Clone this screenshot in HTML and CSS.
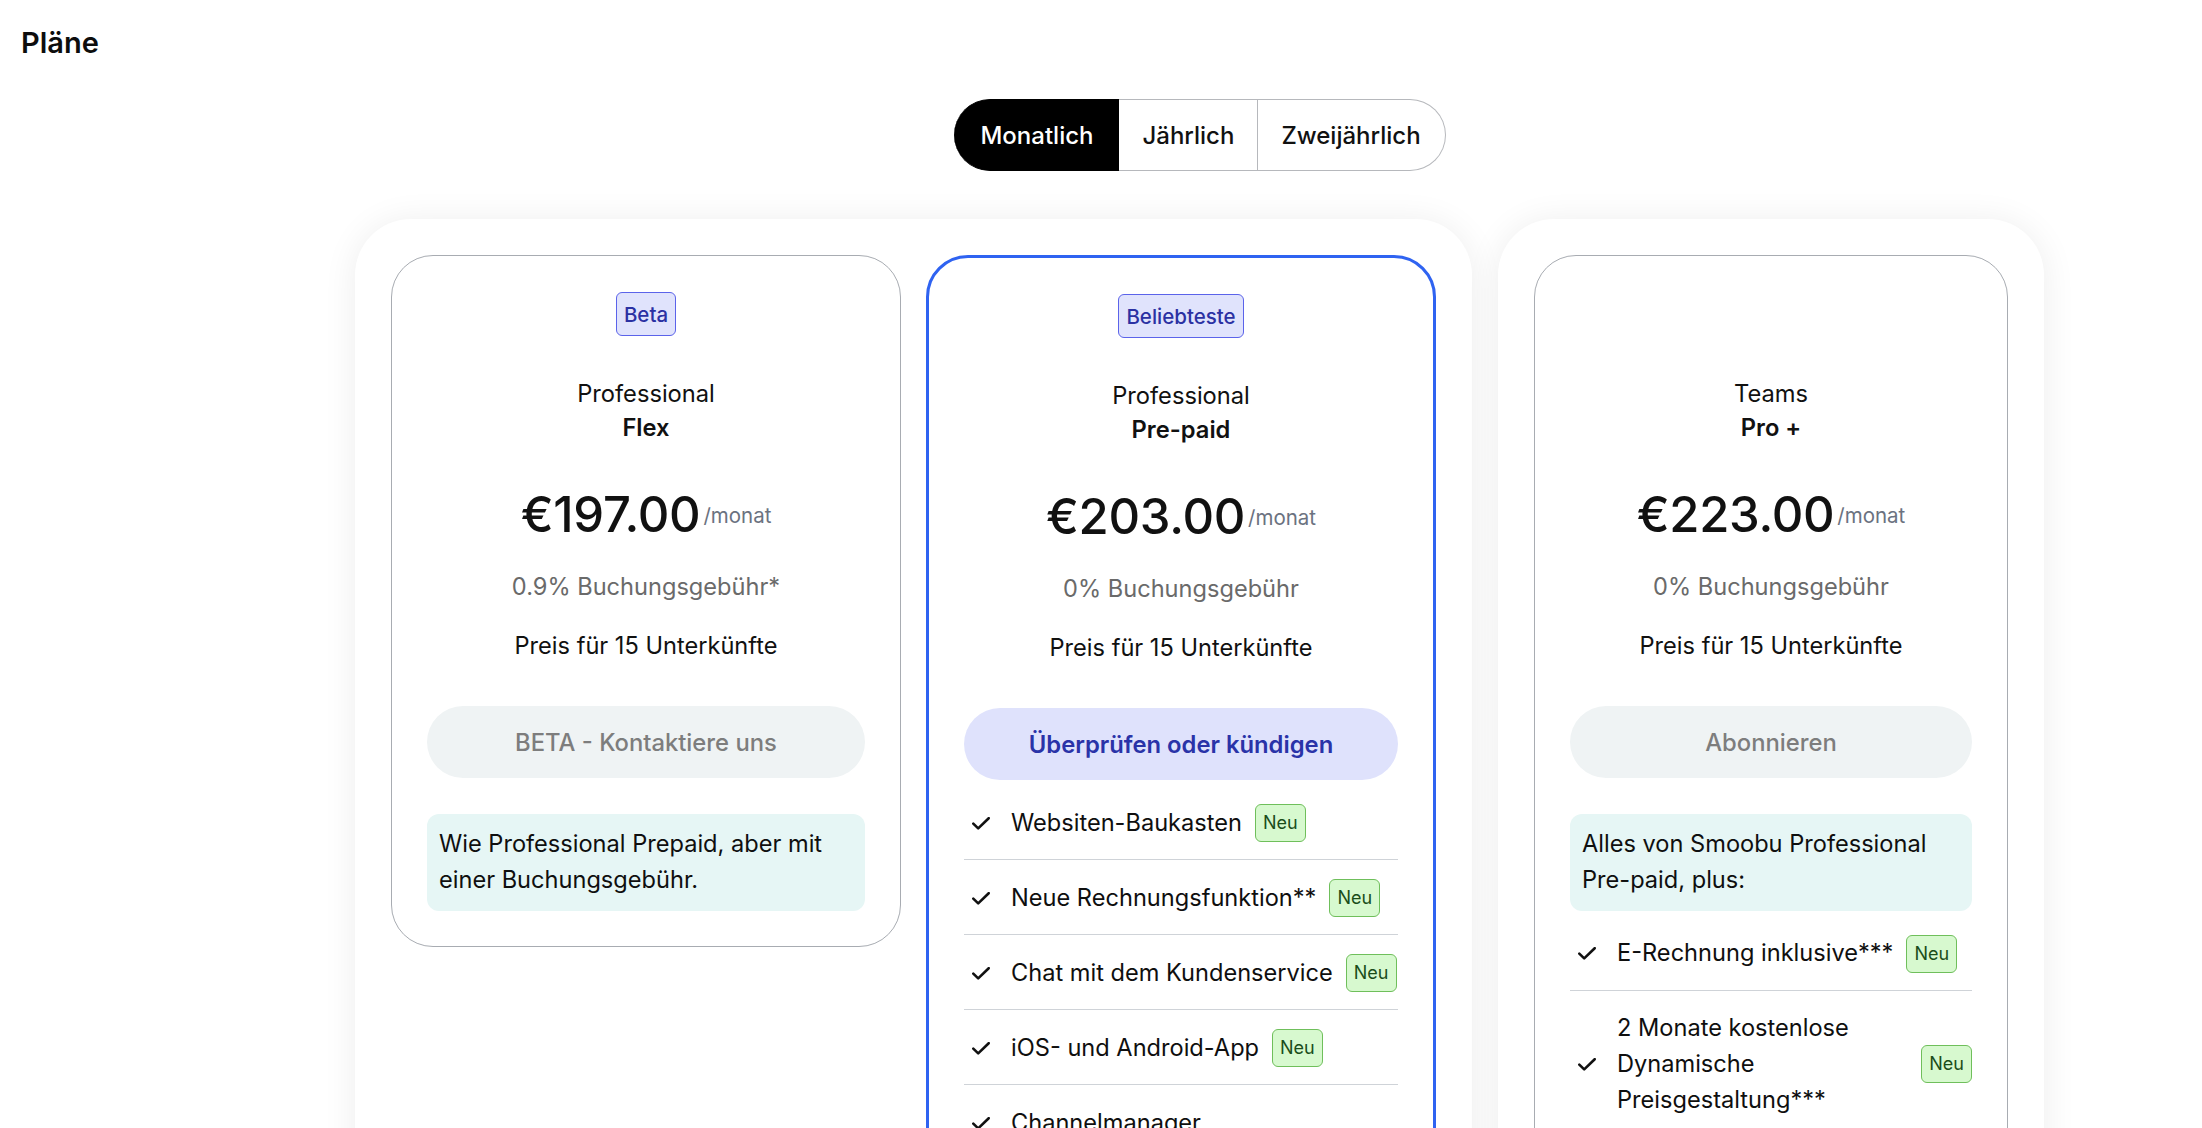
FILE: index.html
```html
<!DOCTYPE html>
<html lang="de">
<head>
<meta charset="utf-8">
<title>Pläne</title>
<link rel="stylesheet" href="styles.css">
</head>
<body>
<h1 class="page-title">Pläne</h1>
<main class="plans">
  <div class="period-toggle">
    <button class="seg seg-active">Monatlich</button>
    <button class="seg">Jährlich</button>
    <button class="seg">Zweijährlich</button>
  </div>

  <div class="panels">
    <section class="panel">
      <article class="card">
        <div class="badge-slot"><span class="tag">Beta</span></div>
        <h2 class="plan-name">Professional<strong>Flex</strong></h2>
        <div class="price"><span class="amount">€197.00</span><span class="per">/monat</span></div>
        <p class="fee">0.9% Buchungsgebühr*</p>
        <p class="units">Preis für 15 Unterkünfte</p>
        <button class="cta">BETA - Kontaktiere uns</button>
        <div class="note">Wie Professional Prepaid, aber mit einer Buchungsgebühr.</div>
      </article>

      <article class="card card-featured">
        <div class="badge-slot"><span class="tag">Beliebteste</span></div>
        <h2 class="plan-name">Professional<strong>Pre-paid</strong></h2>
        <div class="price"><span class="amount">€203.00</span><span class="per">/monat</span></div>
        <p class="fee">0% Buchungsgebühr</p>
        <p class="units">Preis für 15 Unterkünfte</p>
        <button class="cta cta-primary">Überprüfen oder kündigen</button>
        <ul class="features">
          <li class="feature">
            <svg class="check" viewBox="0 0 18 13"><path d="M1.3 6.6 L6.2 11.4 L16.7 1.2"/></svg>
            <span class="feature-text">Websiten-Baukasten</span><span class="new">Neu</span>
          </li>
          <li class="feature">
            <svg class="check" viewBox="0 0 18 13"><path d="M1.3 6.6 L6.2 11.4 L16.7 1.2"/></svg>
            <span class="feature-text">Neue Rechnungsfunktion**</span><span class="new">Neu</span>
          </li>
          <li class="feature">
            <svg class="check" viewBox="0 0 18 13"><path d="M1.3 6.6 L6.2 11.4 L16.7 1.2"/></svg>
            <span class="feature-text">Chat mit dem Kundenservice</span><span class="new">Neu</span>
          </li>
          <li class="feature">
            <svg class="check" viewBox="0 0 18 13"><path d="M1.3 6.6 L6.2 11.4 L16.7 1.2"/></svg>
            <span class="feature-text">iOS- und Android-App</span><span class="new">Neu</span>
          </li>
          <li class="feature">
            <svg class="check" viewBox="0 0 18 13"><path d="M1.3 6.6 L6.2 11.4 L16.7 1.2"/></svg>
            <span class="feature-text">Channelmanager</span>
          </li>
        </ul>
      </article>
    </section>

    <section class="panel">
      <article class="card card-narrow">
        <div class="badge-slot"></div>
        <h2 class="plan-name">Teams<strong>Pro +</strong></h2>
        <div class="price"><span class="amount">€223.00</span><span class="per">/monat</span></div>
        <p class="fee">0% Buchungsgebühr</p>
        <p class="units">Preis für 15 Unterkünfte</p>
        <button class="cta">Abonnieren</button>
        <div class="note">Alles von Smoobu Professional Pre-paid, plus:</div>
        <ul class="features">
          <li class="feature">
            <svg class="check" viewBox="0 0 18 13"><path d="M1.3 6.6 L6.2 11.4 L16.7 1.2"/></svg>
            <span class="feature-text">E-Rechnung inklusive***</span><span class="new">Neu</span>
          </li>
          <li class="feature">
            <svg class="check" viewBox="0 0 18 13"><path d="M1.3 6.6 L6.2 11.4 L16.7 1.2"/></svg>
            <span class="feature-text">2 Monate kostenlose Dynamische Preisgestaltung***</span><span class="new">Neu</span>
          </li>
        </ul>
      </article>
    </section>
  </div>
</main>
</body>
</html>
```

FILE: styles.css
```css
* {
  box-sizing: border-box;
}

html,
body {
  margin: 0;
  background: #ffffff;
}

body {
  font-family: Inter, "Liberation Sans", sans-serif;
  color: #111111;
  overflow: hidden;
}

.page-title {
  margin: 0;
  padding: 23px 0 0 21px;
  font-size: 29px;
  line-height: 40px;
  font-weight: 600;
  color: #0d0d0d;
}

.plans {
  width: 1690px;
  margin: 36px 0 0 355px;
}

/* billing period toggle */
.period-toggle {
  display: flex;
  justify-content: center;
}

.seg {
  font-family: inherit;
  font-size: 24px;
  font-weight: 500;
  height: 72px;
  padding: 0 23px;
  background: #ffffff;
  color: #111111;
  border: 1px solid #b6b8bc;
  border-left: none;
  cursor: pointer;
}

.seg-active {
  background: #000000;
  color: #ffffff;
  border-color: #000000;
  border-radius: 36px 0 0 36px;
  padding: 0 25px 0 26px;
}

.seg:last-child {
  border-radius: 0 36px 36px 0;
  padding: 0 24px 0 23px;
}

/* panels */
.panels {
  display: flex;
  gap: 26px;
  margin-top: 48px;
  align-items: flex-start;
}

.panel {
  display: flex;
  gap: 25px;
  align-items: flex-start;
  padding: 36px;
  background: #ffffff;
  border-radius: 56px;
  box-shadow: 0 2px 34px rgba(0, 0, 0, 0.075);
}

.card {
  width: 510px;
  border: 1px solid #a8acb2;
  border-radius: 42px;
  padding: 36px 35px 35px;
  text-align: center;
}

.card-featured {
  border: 3px solid #2f63f1;
}

.card-narrow {
  width: 474px;
}

.badge-slot {
  height: 44px;
  display: flex;
  justify-content: center;
}

.tag {
  display: inline-flex;
  align-items: center;
  height: 44px;
  padding: 0 7px;
  border: 1px solid #5b63ea;
  background: #e0e3fc;
  color: #2b31a3;
  border-radius: 6px;
  font-size: 20.5px;
  font-weight: 500;
}

.plan-name {
  margin: 41px 0 0;
  font-size: 23.7px;
  line-height: 34px;
  font-weight: 400;
}

.plan-name strong {
  display: block;
  font-weight: 600;
}

.price {
  margin-top: 41px;
  font-size: 49px;
  line-height: 58px;
}

.amount {
  font-weight: 500;
  letter-spacing: -0.3px;
}

.per {
  font-size: 20.5px;
  line-height: 1;
  color: #6b7280;
  margin-left: 3px;
  vertical-align: 9px;
}

.fee {
  margin: 26px 0 0;
  font-size: 23.6px;
  line-height: 34px;
  color: #6a6a6a;
}

.units {
  margin: 25px 0 0;
  font-size: 23.6px;
  line-height: 34px;
}

.cta {
  display: block;
  width: 100%;
  height: 72px;
  margin-top: 43px;
  border: none;
  border-radius: 36px;
  background: #eff3f4;
  color: #7d7d7d;
  font-family: inherit;
  font-size: 23.8px;
  font-weight: 500;
  cursor: pointer;
}

.cta-primary {
  background: #dfe2fc;
  color: #2a33a8;
  font-weight: 600;
}

.note {
  margin-top: 36px;
  padding: 12px 12px 12px;
  background: #e6f6f5;
  border-radius: 12px;
  text-align: left;
  font-size: 23.6px;
  line-height: 36.3px;
  color: #0f0f0f;
}

/* feature list */
.features {
  list-style: none;
  margin: 5px 0 0;
  padding: 0;
  text-align: left;
}

.feature {
  display: flex;
  align-items: center;
  padding: 19px 0 17px;
  border-bottom: 1px solid #cfd3d8;
  font-size: 23.6px;
  line-height: 36.3px;
  min-height: 75px;
  color: #0f0f0f;
}

.feature:last-child {
  border-bottom: none;
}

.check {
  flex: none;
  width: 18px;
  height: 13px;
  margin: 0 21px 0 8px;
  fill: none;
  stroke: #111111;
  stroke-width: 2.6;
  stroke-linecap: round;
  stroke-linejoin: round;
}

.feature-text {
  flex: 0 1 auto;
}

.new {
  flex: none;
  display: inline-flex;
  align-items: center;
  height: 38px;
  margin-left: 13px;
  padding: 0 7px;
  background: #d7f9cf;
  border: 1px solid #6fbf5b;
  border-radius: 6px;
  color: #1a4d1a;
  font-size: 18px;
  line-height: 1;
}
```
